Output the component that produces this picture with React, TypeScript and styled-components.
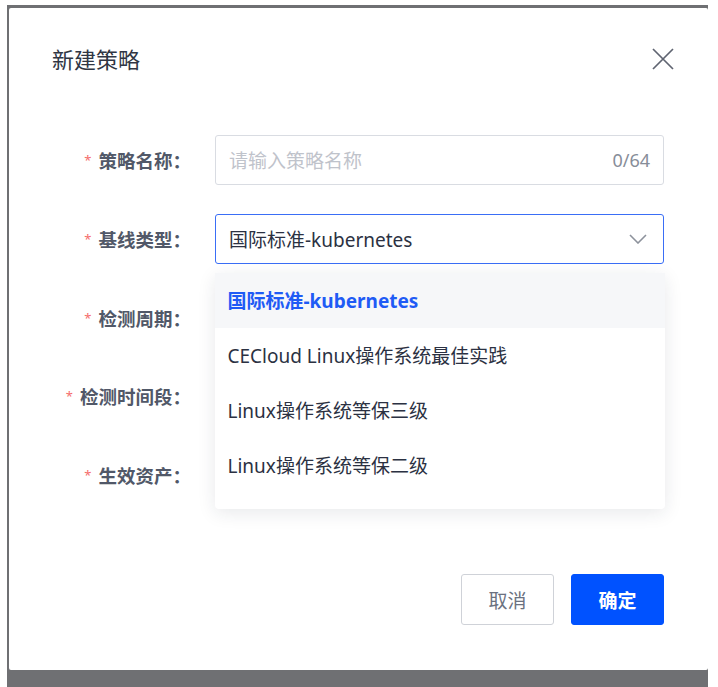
import React from "react";
import styled, { createGlobalStyle } from "styled-components";

const Global = createGlobalStyle`
  html, body { margin: 0; padding: 0; background: #ffffff; }
  body { font-family: "Noto Sans", "Noto Sans CJK SC", sans-serif; }
  * { box-sizing: border-box; }
`;

const Mask = styled.div`
  margin: 5px 0 0 7px;
  width: 701px;
  height: 682px;
  background: #6f7073;
  padding: 3px 0 17px 2px;
  display: flex;
`;

const Modal = styled.div`
  position: relative;
  flex: 1;
  background: #ffffff;
  border-radius: 2px;
  padding: 40px 44px 45px 43px;
  display: flex;
  flex-direction: column;
`;

const Title = styled.h2`
  margin: 0;
  font-size: 22px;
  line-height: 22px;
  font-weight: 400;
  color: #303643;
`;

const CloseButton = styled.button`
  position: absolute;
  top: 40px;
  right: 34px;
  width: 22px;
  height: 22px;
  padding: 0;
  border: none;
  background: none;
  display: flex;
  cursor: pointer;
`;

const Form = styled.div`
  margin-top: 65px;
  display: grid;
  grid-template-columns: 139px 1fr;
  column-gap: 24px;
  row-gap: 28.75px;
  grid-auto-rows: 50px;
`;

const Label = styled.label`
  display: flex;
  align-items: center;
  justify-content: flex-end;
  font-size: 18.5px;
  font-weight: 600;
  color: #515868;
  white-space: nowrap;
`;

const Star = styled.span`
  color: #f56c6c;
  font-size: 13px;
  font-weight: 400;
  margin-right: 7px;
  align-self: flex-start;
  margin-top: 16px;
`;

const Field = styled.div<{ $focused?: boolean }>`
  position: relative;
  height: 50px;
  display: flex;
  align-items: center;
  padding: 0 13px;
  border: 1px solid ${(p) => (p.$focused ? "#3a6ef6" : "#d9dce2")};
  border-width: ${(p) => (p.$focused ? "1.5px" : "1px")};
  border-radius: 3px;
  background: #ffffff;
  font-size: 19px;
  color: #2b3142;
`;

const Placeholder = styled.span`
  flex: 1;
  color: #bfc3cb;
`;

const Value = styled.span`
  flex: 1;
`;

const Counter = styled.span`
  font-size: 18px;
  color: #878d99;
`;

const Dropdown = styled.ul`
  position: absolute;
  top: calc(100% + 10px);
  left: -1.5px;
  right: -1.5px;
  margin: 0;
  padding: 0 0 16px;
  list-style: none;
  background: #ffffff;
  border-radius: 4px;
  box-shadow: 0 4px 18px rgba(30, 40, 60, 0.1);
  z-index: 10;
`;

const Option = styled.li<{ $active?: boolean }>`
  height: 55px;
  display: flex;
  align-items: center;
  padding: 0 13px;
  font-size: 19px;
  font-weight: ${(p) => (p.$active ? 700 : 400)};
  color: ${(p) => (p.$active ? "#1f5bf5" : "#2b3142")};
  background: ${(p) => (p.$active ? "#f6f7f9" : "transparent")};
`;

const Footer = styled.div`
  margin-top: auto;
  display: flex;
  justify-content: flex-end;
  gap: 17px;
`;

const Button = styled.button<{ $primary?: boolean }>`
  width: 93px;
  height: 51px;
  border-radius: 3px;
  font-family: inherit;
  font-size: 19px;
  font-weight: ${(p) => (p.$primary ? 700 : 400)};
  color: ${(p) => (p.$primary ? "#ffffff" : "#6b7180")};
  background: ${(p) => (p.$primary ? "#0052ff" : "#ffffff")};
  border: 1px solid ${(p) => (p.$primary ? "#0052ff" : "#cfd2d8")};
  cursor: pointer;
`;

const CloseIcon = () => (
  <svg width="22" height="22" viewBox="0 0 22 22">
    <path d="M1 1 L21 21 M21 1 L1 21" stroke="#5f6471" strokeWidth="1.7" fill="none" />
  </svg>
);

const Chevron = () => (
  <svg width="18" height="10" viewBox="0 0 18 10" style={{ marginRight: 3 }}>
    <path d="M1 1 L9 9 L17 1" stroke="#8d929c" strokeWidth="1.6" fill="none" />
  </svg>
);

const options = [
  "国际标准-kubernetes",
  "CECloud Linux操作系统最佳实践",
  "Linux操作系统等保三级",
  "Linux操作系统等保二级",
];

export default function App() {
  return (
    <>
      <Global />
      <Mask>
        <Modal>
          <Title>新建策略</Title>
          <CloseButton aria-label="关闭">
            <CloseIcon />
          </CloseButton>
          <Form>
            <Label><Star>*</Star>策略名称：</Label>
            <Field>
              <Placeholder>请输入策略名称</Placeholder>
              <Counter>0/64</Counter>
            </Field>

            <Label><Star>*</Star>基线类型：</Label>
            <Field $focused>
              <Value>国际标准-kubernetes</Value>
              <Chevron />
              <Dropdown>
                {options.map((o, i) => (
                  <Option key={o} $active={i === 0}>{o}</Option>
                ))}
              </Dropdown>
            </Field>

            <Label><Star>*</Star>检测周期：</Label>
            <Field />

            <Label><Star>*</Star>检测时间段：</Label>
            <Field />

            <Label><Star>*</Star>生效资产：</Label>
            <Field />
          </Form>
          <Footer>
            <Button>取消</Button>
            <Button $primary>确定</Button>
          </Footer>
        </Modal>
      </Mask>
    </>
  );
}
